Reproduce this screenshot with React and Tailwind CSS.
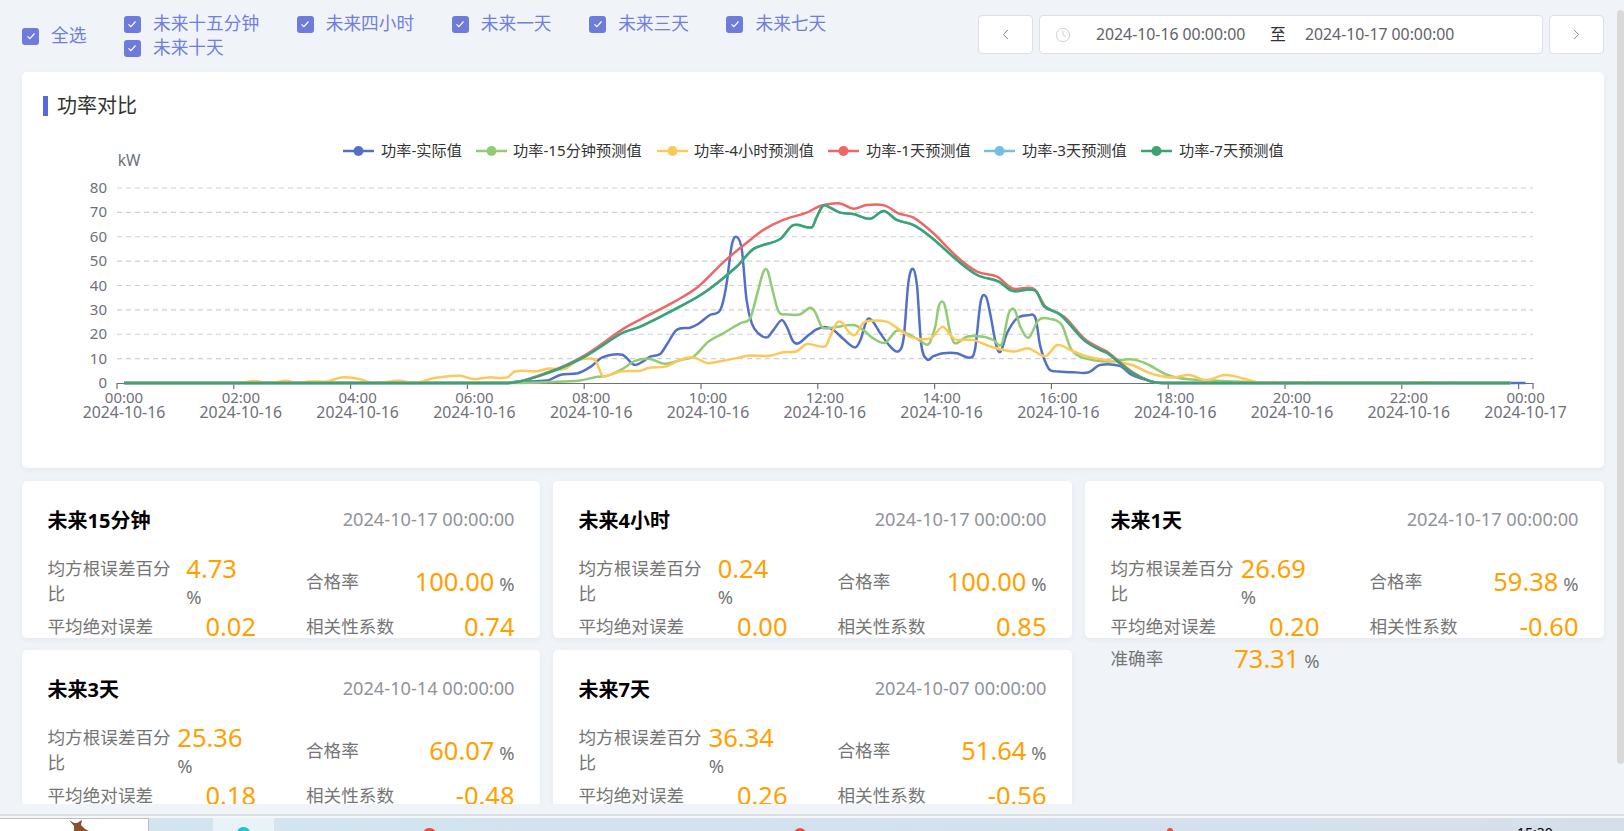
import React from "react";
import { ChevronLeft, ChevronRight, Clock } from "lucide-react";

const blue = [[0.12,0],[6.7,0],[6.85,0.6],[7.36,1],[7.6,3.4],[7.89,4],[8.12,6.8],[8.31,10.5],[8.65,11.6],[8.85,7.5],[8.96,8.2],[9.13,10.8],[9.3,11.9],[9.41,15.6],[9.58,21.7],[9.81,22.7],[9.95,24.2],[10.15,27.9],[10.33,30],[10.43,39.5],[10.53,57],[10.62,59.8],[10.7,54.5],[10.78,34],[10.87,24.5],[10.98,20.4],[11.13,18.7],[11.24,21.7],[11.38,25.8],[11.47,23],[11.58,17],[11.67,16.3],[11.81,19],[11.98,22],[12.13,23],[12.27,21.7],[12.44,18],[12.64,14.6],[12.73,17.6],[12.84,25.8],[12.93,25.6],[13.07,20.4],[13.24,15],[13.38,13],[13.47,18.3],[13.55,41],[13.63,46.8],[13.7,39.5],[13.77,16],[13.87,9.7],[13.98,11],[14.15,12.2],[14.38,12.2],[14.6,10.4],[14.69,13.5],[14.79,33.4],[14.88,35.4],[14.95,28.6],[15.06,15],[15.13,12.9],[15.24,20.4],[15.41,26.5],[15.61,27.8],[15.73,26.5],[15.81,15],[15.95,6],[16.07,4.8],[16.38,4.4],[16.64,4.4],[16.83,7.4],[17.17,7],[17.38,3.3],[17.69,0.8],[17.85,0],[24.12,0]];
const lightGreen = [[0.12,0],[6.8,0],[7.43,0.4],[7.93,1],[8.2,2.5],[8.39,2.9],[8.65,5.7],[8.88,9.2],[9.13,9.9],[9.38,7.9],[9.68,9.6],[9.87,10.8],[10.13,17],[10.38,20.4],[10.67,24.5],[10.84,26.5],[10.95,35.4],[11.07,45.7],[11.14,46],[11.21,39.5],[11.33,29.3],[11.47,28.2],[11.7,28.2],[11.87,30.9],[11.95,29.3],[12.07,23],[12.21,22.6],[12.61,23.8],[12.78,21.7],[12.95,18.3],[13.15,16.5],[13.35,21.5],[13.52,20.4],[13.75,17.4],[13.9,16],[14.01,23],[14.07,31.3],[14.13,33.4],[14.18,31.3],[14.27,20.4],[14.35,16.3],[14.55,19],[14.84,19],[15.01,17.6],[15.15,16],[15.27,28.6],[15.37,30],[15.47,23],[15.61,18.6],[15.78,25.8],[15.98,26.3],[16.18,23.8],[16.33,14.2],[16.52,10.5],[16.95,8.8],[17.38,9.7],[17.62,8],[17.99,3.3],[18.36,1.5],[19.27,0.5],[19.5,0],[20.0,0],[20.25,0.3],[20.5,0],[22.1,0],[22.35,0.3],[22.6,0],[23.86,0]];
const orange = [[0.12,0],[2.1,0],[2.35,0.8],[2.6,0],[2.9,0.9],[3.1,0],[3.3,0.6],[3.6,0.6],[3.84,2.3],[4.15,1.6],[4.4,0],[4.83,0.9],[5.1,0],[5.44,2],[5.87,3],[6.1,1.6],[6.36,2.3],[6.68,2.3],[6.82,4.8],[7.17,4.8],[7.4,5.9],[7.66,5.7],[7.89,9.3],[8.12,10],[8.2,8.9],[8.31,3],[8.39,3],[8.65,4.8],[8.96,5],[9.1,6.2],[9.4,6.8],[9.65,9.6],[9.88,10.5],[10.1,8.2],[10.33,8.9],[10.63,10.3],[10.8,11.2],[11.18,11.2],[11.41,12.6],[11.64,13],[11.81,16],[12.13,15],[12.21,19],[12.33,24.8],[12.41,24.8],[12.53,21],[12.64,19.7],[12.75,23.8],[12.84,25.4],[13.18,25.2],[13.41,21.7],[13.61,18.7],[13.93,18.3],[14.13,23],[14.25,20.4],[14.35,17.9],[14.67,17.6],[14.95,15],[15.35,12.9],[15.61,14.2],[15.9,11],[16.1,15.6],[16.33,13.5],[16.62,10.8],[16.95,9.4],[17.38,7.4],[17.69,4],[18.07,2.2],[18.36,3.3],[18.65,1.2],[18.98,3.3],[19.45,0.8],[19.6,0],[19.8,0.4],[20.1,0],[20.4,0.4],[20.7,0],[22.1,0],[22.36,0.4],[22.6,0],[22.85,0.2],[23.1,0],[23.86,0]];
const red = [[0.12,0],[6.7,0],[7.43,4.8],[8,11.2],[8.65,21.9],[8.95,25.9],[9.53,33.2],[9.95,39.5],[10.38,49.5],[10.73,56.5],[11.07,62.8],[11.41,66.9],[11.81,69.9],[12.04,72.6],[12.38,73.7],[12.61,71.5],[12.84,73],[13.15,72.8],[13.38,69.6],[13.64,67.8],[13.98,61.4],[14.38,51.8],[14.73,45.7],[15.07,43.6],[15.33,38.8],[15.7,38.6],[15.9,31.3],[16.22,27.2],[16.56,18.3],[16.84,14.2],[16.95,12.9],[17.38,4.6],[17.69,0.8],[17.9,0],[23.86,0]];
const darkGreen = [[0.12,0],[6.7,0],[7.43,4.6],[8,10.7],[8.65,20.5],[8.95,23],[9.53,30],[10.04,36.8],[10.61,47.7],[10.9,55],[11.35,59],[11.58,64.8],[11.9,63.9],[11.98,68],[12.09,72.8],[12.21,71.9],[12.38,69.9],[12.61,69.3],[12.9,67.4],[13.13,70.6],[13.35,66.9],[13.64,64.8],[13.93,60],[14.38,50.5],[14.73,44.3],[15.1,41.6],[15.33,37.8],[15.73,37.9],[15.87,31.6],[16.16,27.9],[16.56,17.6],[16.84,13.5],[16.95,12.4],[17.38,4.2],[17.69,0.8],[17.9,0],[23.86,0]];

const series = [
  { name: "功率-实际值", color: "#5470c6", data: blue, lineX: 343, textX: 381 },
  { name: "功率-15分钟预测值", color: "#91cc75", data: lightGreen, lineX: 476, textX: 513 },
  { name: "功率-4小时预测值", color: "#fcc858", data: orange, lineX: 657, textX: 694 },
  { name: "功率-1天预测值", color: "#ee6666", data: red, lineX: 828, textX: 866 },
  { name: "功率-3天预测值", color: "#73c0de", data: darkGreen, lineX: 984, textX: 1022 },
  { name: "功率-7天预测值", color: "#3ba272", data: darkGreen, lineX: 1141, textX: 1179 },
];

const xOf = (t) => 117 + 58.4 * t;
const yOf = (v) => 383 - 2.4375 * v;

// smooth line through unevenly spaced points, handles stay inside each segment
function linePath(data) {
  const pts = data.map(([t, v]) => [xOf(t), yOf(v)]);
  const slope = (i) => {
    const a = pts[i - 1] || pts[i];
    const b = pts[i + 1] || pts[i];
    return (b[1] - a[1]) / (b[0] - a[0]);
  };
  let d = `M${pts[0][0]} ${pts[0][1]}`;
  for (let i = 0; i < pts.length - 1; i++) {
    const p1 = pts[i];
    const p2 = pts[i + 1];
    const h = (p2[0] - p1[0]) / 3;
    const c1y = Math.min(383, p1[1] + slope(i) * h);
    const c2y = Math.min(383, p2[1] - slope(i + 1) * h);
    d += `C${(p1[0] + h).toFixed(1)} ${c1y.toFixed(1)} ${(p2[0] - h).toFixed(1)} ${c2y.toFixed(1)} ${p2[0].toFixed(1)} ${p2[1].toFixed(1)}`;
  }
  return d;
}

const ticks = [
  ["00:00", "2024-10-16"], ["02:00", "2024-10-16"], ["04:00", "2024-10-16"],
  ["06:00", "2024-10-16"], ["08:00", "2024-10-16"], ["10:00", "2024-10-16"],
  ["12:00", "2024-10-16"], ["14:00", "2024-10-16"], ["16:00", "2024-10-16"],
  ["18:00", "2024-10-16"], ["20:00", "2024-10-16"], ["22:00", "2024-10-16"],
  ["00:00", "2024-10-17"],
];

function PowerChart() {
  return (
    <svg viewBox="22 135 1582 300" className="block w-[1582px] h-[300px]">
      {series.map((s) => (
        <g key={s.name}>
          <line x1={s.lineX} x2={s.lineX + 31} y1={151} y2={151} stroke={s.color} strokeWidth="2.5" />
          <circle cx={s.lineX + 15.5} cy={151} r="5" fill={s.color} />
          <text x={s.textX} y={156} fontSize="15.2" fill="#333">{s.name}</text>
        </g>
      ))}
      <text x={129} y={166} fontSize="15.5" fill="#6e7079" textAnchor="middle">kW</text>
      {[10, 20, 30, 40, 50, 60, 70, 80].map((v) => (
        <line key={v} x1={117} x2={1533} y1={yOf(v)} y2={yOf(v)} stroke="#d0d0d0" strokeWidth="1.2" strokeDasharray="5 4" />
      ))}
      {[0, 10, 20, 30, 40, 50, 60, 70, 80].map((v) => (
        <text key={v} x={107} y={yOf(v) + 5} fontSize="15" fill="#6e7079" textAnchor="end">{v}</text>
      ))}
      <line x1={117} x2={1533} y1={383.5} y2={383.5} stroke="#6e7079" strokeWidth="1.2" />
      {ticks.map(([time, date], i) => {
        const x = xOf(i * 2);
        return (
          <g key={i}>
            <line x1={x} x2={x} y1={383} y2={389} stroke="#6e7079" strokeWidth="1.2" />
            <text fill="#6e7079" textAnchor="middle">
              <tspan x={x + 7} y={403} fontSize="15">{time}</tspan>
              <tspan x={x + 7} y={418} fontSize="15.8">{date}</tspan>
            </text>
          </g>
        );
      })}
      <line x1={1533} x2={1533} y1={383} y2={389} stroke="#6e7079" strokeWidth="1.2" />
      {series.map((s) => (
        <path key={s.name} d={linePath(s.data)} fill="none" stroke={s.color} strokeWidth="2.5" strokeLinejoin="round" />
      ))}
    </svg>
  );
}

function CheckItem({ label }) {
  return (
    <label className="flex items-center h-6 mr-[37.6px] text-[17.7px] text-[#717ede] whitespace-nowrap">
      <span className="flex items-center justify-center w-[17px] h-[17px] mr-3 rounded-[3px] bg-[#6f7bdb]">
        <svg viewBox="0 0 12 12" className="w-3 h-3" fill="none" stroke="#fff" strokeWidth="1.2">
          <path d="M2.5 6.3l2.4 2.4 4.6-5.2" />
        </svg>
      </span>
      <span className="mb-[2px]">{label}</span>
    </label>
  );
}

function Metric({ label, value, unit }) {
  return (
    <div className="flex items-center justify-between text-[17.6px] leading-[25px] text-[#757575]">
      <span>{label}</span>
      <span>
        <span className="text-[25.5px] leading-[32px] text-[#ffa000]">{value}</span>
        {unit && <span className="text-[18.4px]"> {unit}</span>}
      </span>
    </div>
  );
}

function StatCard({ title, date, rmse, pass, mae, corr, accuracy }) {
  return (
    <div className="h-[157px] pt-[26px] pl-[25.5px] pr-[25.5px] bg-white rounded-[5px] shadow-[0_2px_6px_rgba(0,0,0,0.05)]">
      <div className="flex items-center justify-between h-7 mb-[17px]">
        <span className="text-[20px] font-bold text-black">{title}</span>
        <span className="mb-[2px] text-[18.2px] text-[#909399]">{date}</span>
      </div>
      <div className="grid grid-cols-2 gap-x-[50px]">
        <Metric label="均方根误差百分比" value={rmse} unit="%" />
        <Metric label="合格率" value={pass} unit="%" />
        <Metric label="平均绝对误差" value={mae} />
        <Metric label="相关性系数" value={corr} />
        <Metric label="准确率" value={accuracy} unit="%" />
      </div>
    </div>
  );
}

const cards = [
  { title: "未来15分钟", date: "2024-10-17 00:00:00", rmse: "4.73", pass: "100.00", mae: "0.02", corr: "0.74", accuracy: "95.27" },
  { title: "未来4小时", date: "2024-10-17 00:00:00", rmse: "0.24", pass: "100.00", mae: "0.00", corr: "0.85", accuracy: "99.76" },
  { title: "未来1天", date: "2024-10-17 00:00:00", rmse: "26.69", pass: "59.38", mae: "0.20", corr: "-0.60", accuracy: "73.31" },
  { title: "未来3天", date: "2024-10-14 00:00:00", rmse: "25.36", pass: "60.07", mae: "0.18", corr: "-0.48", accuracy: "74.64" },
  { title: "未来7天", date: "2024-10-07 00:00:00", rmse: "36.34", pass: "51.64", mae: "0.26", corr: "-0.56", accuracy: "63.66" },
];

export default function App() {
  return (
    <div className="relative h-[831px] overflow-hidden bg-[#f0f4f8] font-['Noto_Sans','Noto_Sans_CJK_SC',sans-serif]">
      <div className="h-[804px] pl-[22px] pr-5 overflow-hidden">
        {/* top filter bar */}
        <div className="flex justify-between h-[72px] pt-3">
          <div className="flex items-center h-12">
            <CheckItem label="全选" />
            <div className="flex flex-wrap w-[780px]">
              {["未来十五分钟", "未来四小时", "未来一天", "未来三天", "未来七天", "未来十天"].map((t) => (
                <CheckItem key={t} label={t} />
              ))}
            </div>
          </div>
          <div className="flex mt-[3px] h-[39px] gap-[6px] text-[#606266]">
            <button className="flex items-center justify-center w-[55px] bg-white border border-[#dcdfe6] rounded">
              <ChevronLeft size={17} strokeWidth={1.2} color="#707070" />
            </button>
            <div className="flex items-center w-[504px] pl-[15px] bg-white border border-[#dcdfe6] rounded text-[15.8px]">
              <Clock size={16} strokeWidth={1.2} color="#c0c4cc" />
              <span className="ml-[25px] w-[174px]">2024-10-16 00:00:00</span>
              <span className="w-[35px] text-[#303133]">至</span>
              <span>2024-10-17 00:00:00</span>
            </div>
            <button className="flex items-center justify-center w-[55px] bg-white border border-[#dcdfe6] rounded">
              <ChevronRight size={17} strokeWidth={1.2} color="#707070" />
            </button>
          </div>
        </div>

        {/* power chart */}
        <div className="h-[396px] mb-[13px] bg-white rounded-[5px] shadow-[0_2px_6px_rgba(0,0,0,0.05)]">
          <div className="flex items-center h-[63px] pt-[5px] pl-[21px]">
            <span className="w-[5px] h-5 mr-[9px] bg-[#5a67d8]"></span>
            <span className="text-[20px] text-[#333]">功率对比</span>
          </div>
          <PowerChart />
        </div>

        {/* forecast cards */}
        <div className="grid grid-cols-[518px_519px_519px] gap-x-[13px] gap-y-3">
          {cards.map((c) => (
            <StatCard key={c.title} {...c} />
          ))}
        </div>
      </div>

      {/* bottom edge and desktop strip */}
      <div className="h-3 border-b-2 border-[#dcdfe2]"></div>
      <div className="h-[2px] bg-[#f4f6f8]"></div>
      <div className="relative flex h-[13px] overflow-hidden bg-gradient-to-r from-[#d2e6ee] via-[#d2e2ee] to-[#d6dfe9]">
        <div className="relative w-[149px] bg-white border-t border-r border-[#bdbdbd]">
          <svg viewBox="0 0 24 12" className="absolute left-[68px] top-0 w-6 h-3">
            <path d="M1 1l5 3 3 0 5-3 -1 5 4 4 4 2H6L6 7z" fill="#8a4f2d" />
          </svg>
        </div>
        <div className="w-16"></div>
        <div className="relative w-[61px] bg-[#e9f3f7]">
          <span className="absolute left-6 top-[9px] w-[13px] h-3 rounded-full bg-[#22c4d2]"></span>
        </div>
        <span className="absolute left-[423px] top-[10px] w-[13px] h-3 rounded-full bg-[#ef4a3c]"></span>
        <span className="absolute left-[794px] top-[10px] w-3 h-3 rounded-full bg-[#ef4a3c]"></span>
        <span className="absolute left-[1167px] top-[10px] w-[6px] h-3 rounded-full bg-[#ef4a3c]"></span>
        <span className="absolute left-[1517px] top-[5px] text-[14px] leading-[20px] text-black">15:30</span>
      </div>

      {/* scrollbar thumb */}
      <div className="absolute right-0 top-[10px] w-[7px] h-[754px] rounded bg-[#d9d9d9]"></div>
    </div>
  );
}
